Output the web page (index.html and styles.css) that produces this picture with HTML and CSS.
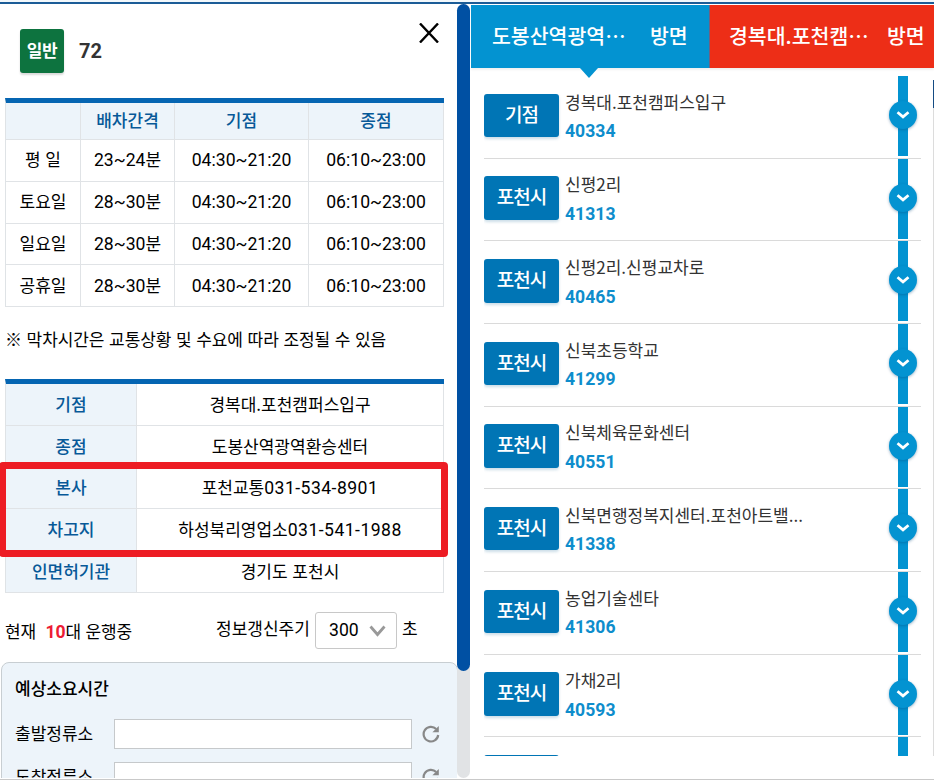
FILE: index.html
```
<!DOCTYPE html>
<html lang="ko">
<head>
<meta charset="utf-8">
<title>72</title>
<link rel="stylesheet" href="styles.css">
</head>
<body>
<svg class="defs" width="0" height="0">
  <symbol id="chevron" viewBox="0 0 14 8"><path d="M1.5 1.2 7 5.9 12.5 1.2" fill="none" stroke="currentColor" stroke-width="2.7" stroke-linecap="butt"/></symbol>
  <symbol id="refresh" viewBox="0 0 18 18"><path d="M14.2 4.1A7.3 7.3 0 1 0 16.2 10" fill="none" stroke="#888" stroke-width="2.2"/><path d="M16.8 1v6.2h-6.4z" fill="#888"/></symbol>
</svg>
<div class="app">
  <section class="info">
    <header class="route">
      <span class="type">일반</span><strong class="number">72</strong>
      <svg class="close" width="20" height="20" viewBox="0 0 20 20"><path d="M1 .5 19 19.5M19 .5 1 19.5" stroke="#000" stroke-width="2.4"/></svg>
    </header>
    <table class="grid times">
      <colgroup><col class="c1"><col class="c2"><col class="c3"><col></colgroup>
      <tr><th></th><th>배차간격</th><th>기점</th><th>종점</th></tr>
      <tr><td>평 일</td><td><b>23~24</b>분</td><td><b>04:30~21:20</b></td><td><b>06:10~23:00</b></td></tr>
      <tr><td>토요일</td><td><b>28~30</b>분</td><td><b>04:30~21:20</b></td><td><b>06:10~23:00</b></td></tr>
      <tr><td>일요일</td><td><b>28~30</b>분</td><td><b>04:30~21:20</b></td><td><b>06:10~23:00</b></td></tr>
      <tr><td>공휴일</td><td><b>28~30</b>분</td><td><b>04:30~21:20</b></td><td><b>06:10~23:00</b></td></tr>
    </table>
    <p class="note">※ 막차시간은 교통상황 및 수요에 따라 조정될 수 있음</p>
    <div class="company">
      <table class="grid contact">
        <colgroup><col class="label"><col></colgroup>
        <tr><th>기점</th><td>경복대.포천캠퍼스입구</td></tr>
        <tr><th>종점</th><td>도봉산역광역환승센터</td></tr>
        <tr><th>본사</th><td>포천교통<b class="tel">031-534-8901</b></td></tr>
        <tr><th>차고지</th><td>하성북리영업소<b class="tel">031-541-1988</b></td></tr>
        <tr><th>인면허기관</th><td>경기도 포천시</td></tr>
      </table>
      <div class="mark"></div>
    </div>
    <div class="status">
      <span class="running">현재 <em>10</em>대 운행중</span>
      <span class="cycle">정보갱신주기</span>
      <span class="select"><b>300</b><svg width="17" height="12" viewBox="0 0 17 12"><path d="M1.5 1.5 8.5 9.5 15.5 1.5" fill="none" stroke="#999" stroke-width="2.8"/></svg></span>
      <span class="sec">초</span>
    </div>
    <div class="estimate">
      <h2>예상소요시간</h2>
      <div class="field"><label>출발정류소</label><span class="input"></span><svg width="18" height="18"><use href="#refresh"/></svg></div>
      <div class="field"><label>도착정류소</label><span class="input"></span><svg width="18" height="18"><use href="#refresh"/></svg></div>
    </div>
  </section>
  <div class="scroll"><div class="thumb"></div></div>
  <section class="stops">
    <nav class="tabs">
      <div class="tab on"><span class="dest">도봉산역광역⋯</span><span>방면</span></div>
      <div class="tab red"><span class="dest">경복대.포천캠⋯</span><span>방면</span></div>
    </nav>
    <div class="body">
      <ul class="list">
        <li><span class="badge">기점</span><div class="stop"><p>경복대.포천캠퍼스입구</p><b>40334</b></div><div class="line"><i><svg width="14" height="8"><use href="#chevron"/></svg></i></div></li>
        <li><span class="badge">포천시</span><div class="stop"><p>신평2리</p><b>41313</b></div><div class="line"><i><svg width="14" height="8"><use href="#chevron"/></svg></i></div></li>
        <li><span class="badge">포천시</span><div class="stop"><p>신평2리.신평교차로</p><b>40465</b></div><div class="line"><i><svg width="14" height="8"><use href="#chevron"/></svg></i></div></li>
        <li><span class="badge">포천시</span><div class="stop"><p>신북초등학교</p><b>41299</b></div><div class="line"><i><svg width="14" height="8"><use href="#chevron"/></svg></i></div></li>
        <li><span class="badge">포천시</span><div class="stop"><p>신북체육문화센터</p><b>40551</b></div><div class="line"><i><svg width="14" height="8"><use href="#chevron"/></svg></i></div></li>
        <li><span class="badge">포천시</span><div class="stop"><p>신북면행정복지센터.포천아트밸...</p><b>41338</b></div><div class="line"><i><svg width="14" height="8"><use href="#chevron"/></svg></i></div></li>
        <li><span class="badge">포천시</span><div class="stop"><p>농업기술센타</p><b>41306</b></div><div class="line"><i><svg width="14" height="8"><use href="#chevron"/></svg></i></div></li>
        <li><span class="badge">포천시</span><div class="stop"><p>가채2리</p><b>40593</b></div><div class="line"><i><svg width="14" height="8"><use href="#chevron"/></svg></i></div></li>
        <li><span class="badge"></span><div class="stop"></div><div class="line"></div></li>
      </ul>
      <div class="edge"></div>
    </div>
  </section>
</div>
</body>
</html>
```
FILE: styles.css
```
* { box-sizing: border-box; }
body { margin: 0; height: 783px; overflow: hidden; background: #fff; color: #000; font: 17px/24px "Noto Sans CJK KR", sans-serif; }
p, h2, ul { margin: 0; padding: 0; }
.defs { display: block; height: 0; }
.app { display: flex; height: 780px; border-top: 2px solid #f2f8fc; border-bottom: 1px solid #c9c9c9; position: relative; }
.app::before { content: ""; position: absolute; left: 0; right: 0; top: 0; height: 2px; background: #1b5c97; }
.info { width: 457px; height: 776px; overflow: hidden; flex: none; }

.route { display: flex; align-items: center; height: 96px; padding: 2px 18px 0 20px; }
.type { width: 44px; height: 44px; border-radius: 3px; background: #0d733f; color: #fff; font-size: 17px; font-weight: 700; line-height: 41px; text-align: center; letter-spacing: -.3px; box-shadow: 0 2px 2px rgba(0,0,0,.15); }
.number { margin-left: 15px; font: 700 20px/24px Roboto, sans-serif; color: #333; }
.close { margin: -37px 0 0 auto; }

.grid { width: 439px; margin-left: 5px; border-collapse: separate; border-spacing: 0; table-layout: fixed; border-top: 5px solid #0565b2; border-left: 1px solid #dfe3e6; }
.grid th, .grid td { height: 41.75px; padding: 0; border-right: 1px solid #e0e3e6; border-bottom: 1px solid #e0e3e6; text-align: center; line-height: 24px; }
.grid th { background: #edf4fa; color: #075998; font-weight: 500; }
.grid b { font: 400 17.6px/22px Roboto, sans-serif; letter-spacing: 0; }
.times th { height: 37px; padding-bottom: 2px; }
.times td { padding-bottom: 2px; }
.c1 { width: 75px; }
.c2 { width: 94px; }
.c3 { width: 134px; }
.note { height: 72px; padding: 20px 0 0 5px; letter-spacing: -.08px; }
.company { position: relative; }
.label { width: 131px; }
.contact th, .contact td { padding-bottom: 1px; }
.grid .tel { letter-spacing: .45px; }
.mark { position: absolute; left: -1px; top: 83px; width: 449px; height: 95px; border: 7px solid #ed1c24; border-radius: 4px; }

.status { display: flex; align-items: center; height: 69px; padding: 7px 0 0 5px; }
.running { width: 211px; padding-top: 1px; letter-spacing: -.15px; white-space: pre; }
.running em { margin-left: 5px; color: #ed1c34; font: 700 17.6px/22px Roboto, sans-serif; }
.cycle { width: 99px; margin-top: -5px; white-space: nowrap; }
.select { display: flex; align-items: center; justify-content: space-between; width: 82px; height: 37px; padding: 0 10px 0 13px; border: 1px solid #c8c8c8; border-radius: 3px; }
.select b { margin-top: -2px; font: 400 17.6px/24px Roboto, sans-serif; }
.sec { margin: -5px 0 0 5px; }

.estimate { width: 457px; height: 180px; margin-left: 1px; padding: 13px 13px 0; border: 1px solid #c8ced2; border-radius: 8px; background: #edf4fa; }
.estimate h2 { font-size: 17px; font-weight: 500; line-height: 24px; margin-bottom: 19px; }
.field { display: flex; align-items: center; height: 30px; margin-bottom: 13px; }
.field label { width: 99px; margin-top: -1px; }
.input { width: 298px; height: 30px; border: 1px solid #c6c9cb; background: #fff; }
.field svg { margin-left: 10px; }

.scroll { width: 13px; height: 774px; margin-top: 2px; flex: none; border-radius: 7px; background: #e1e3e5; position: relative; }
.thumb { height: 667px; border-radius: 7px; background: #0050a3; }
.stops { flex: 1; min-width: 0; padding-top: 3px; margin-left: 1px; }
.tabs { display: flex; height: 63px; color: #fff; font-size: 20.5px; font-weight: 500; line-height: 60px; box-shadow: 0 2px 2px rgba(0,0,0,.06); }
.tab { position: relative; display: flex; flex: none; width: 238px; padding-left: 21px; background: #0393d1; }
.tab.red { width: 226px; padding-left: 19px; background: #ed2e17; border-left: 1px solid #6d6283; }
.dest { width: 158px; white-space: nowrap; }
.tab.on::after { content: ""; position: absolute; left: 109px; top: 63px; border: 9px solid transparent; border-top: 10px solid #0393d1; border-bottom: 0; }
.body { display: flex; height: 688px; padding-top: 8px; overflow: hidden; }
.list { width: 437px; height: 680px; margin-left: 13px; overflow: hidden; list-style: none; flex: none; }
.list li { display: flex; height: 82.66px; border-bottom: 1px solid #dadada; }
.badge { width: 75px; height: 43.4px; margin-top: 17.8px; flex: none; border-radius: 3px; background: #0075b5; color: #fff; font-size: 19px; font-weight: 500; line-height: 40px; text-align: center; letter-spacing: -1px; box-shadow: 0 2px 3px rgba(0,90,140,.2); }
.stop { flex: 1; margin-left: 6px; padding-top: 13.8px; color: #333; white-space: nowrap; }
.stop b { display: block; margin-top: 6.4px; color: #0e8dcc; font: 700 17.6px/23px Roboto, sans-serif; letter-spacing: 0; }
.line { width: 10px; height: 80px; margin-right: 13px; flex: none; background: #0393d1; display: flex; justify-content: center; }
.line i { display: flex; align-items: center; justify-content: center; flex: none; width: 28px; height: 28px; margin-top: 25px; border-radius: 50%; background: #0393d1; color: #fff; box-shadow: 0 1px 3px rgba(0,70,120,.4); }
.edge { width: 1px; height: 676px; margin-left: auto; margin-top: 4px; border-top: 28px solid #154b83; background: #dcdcdc; flex: none; }
.list li:last-child .badge { margin-top: 17.5px; }
```
